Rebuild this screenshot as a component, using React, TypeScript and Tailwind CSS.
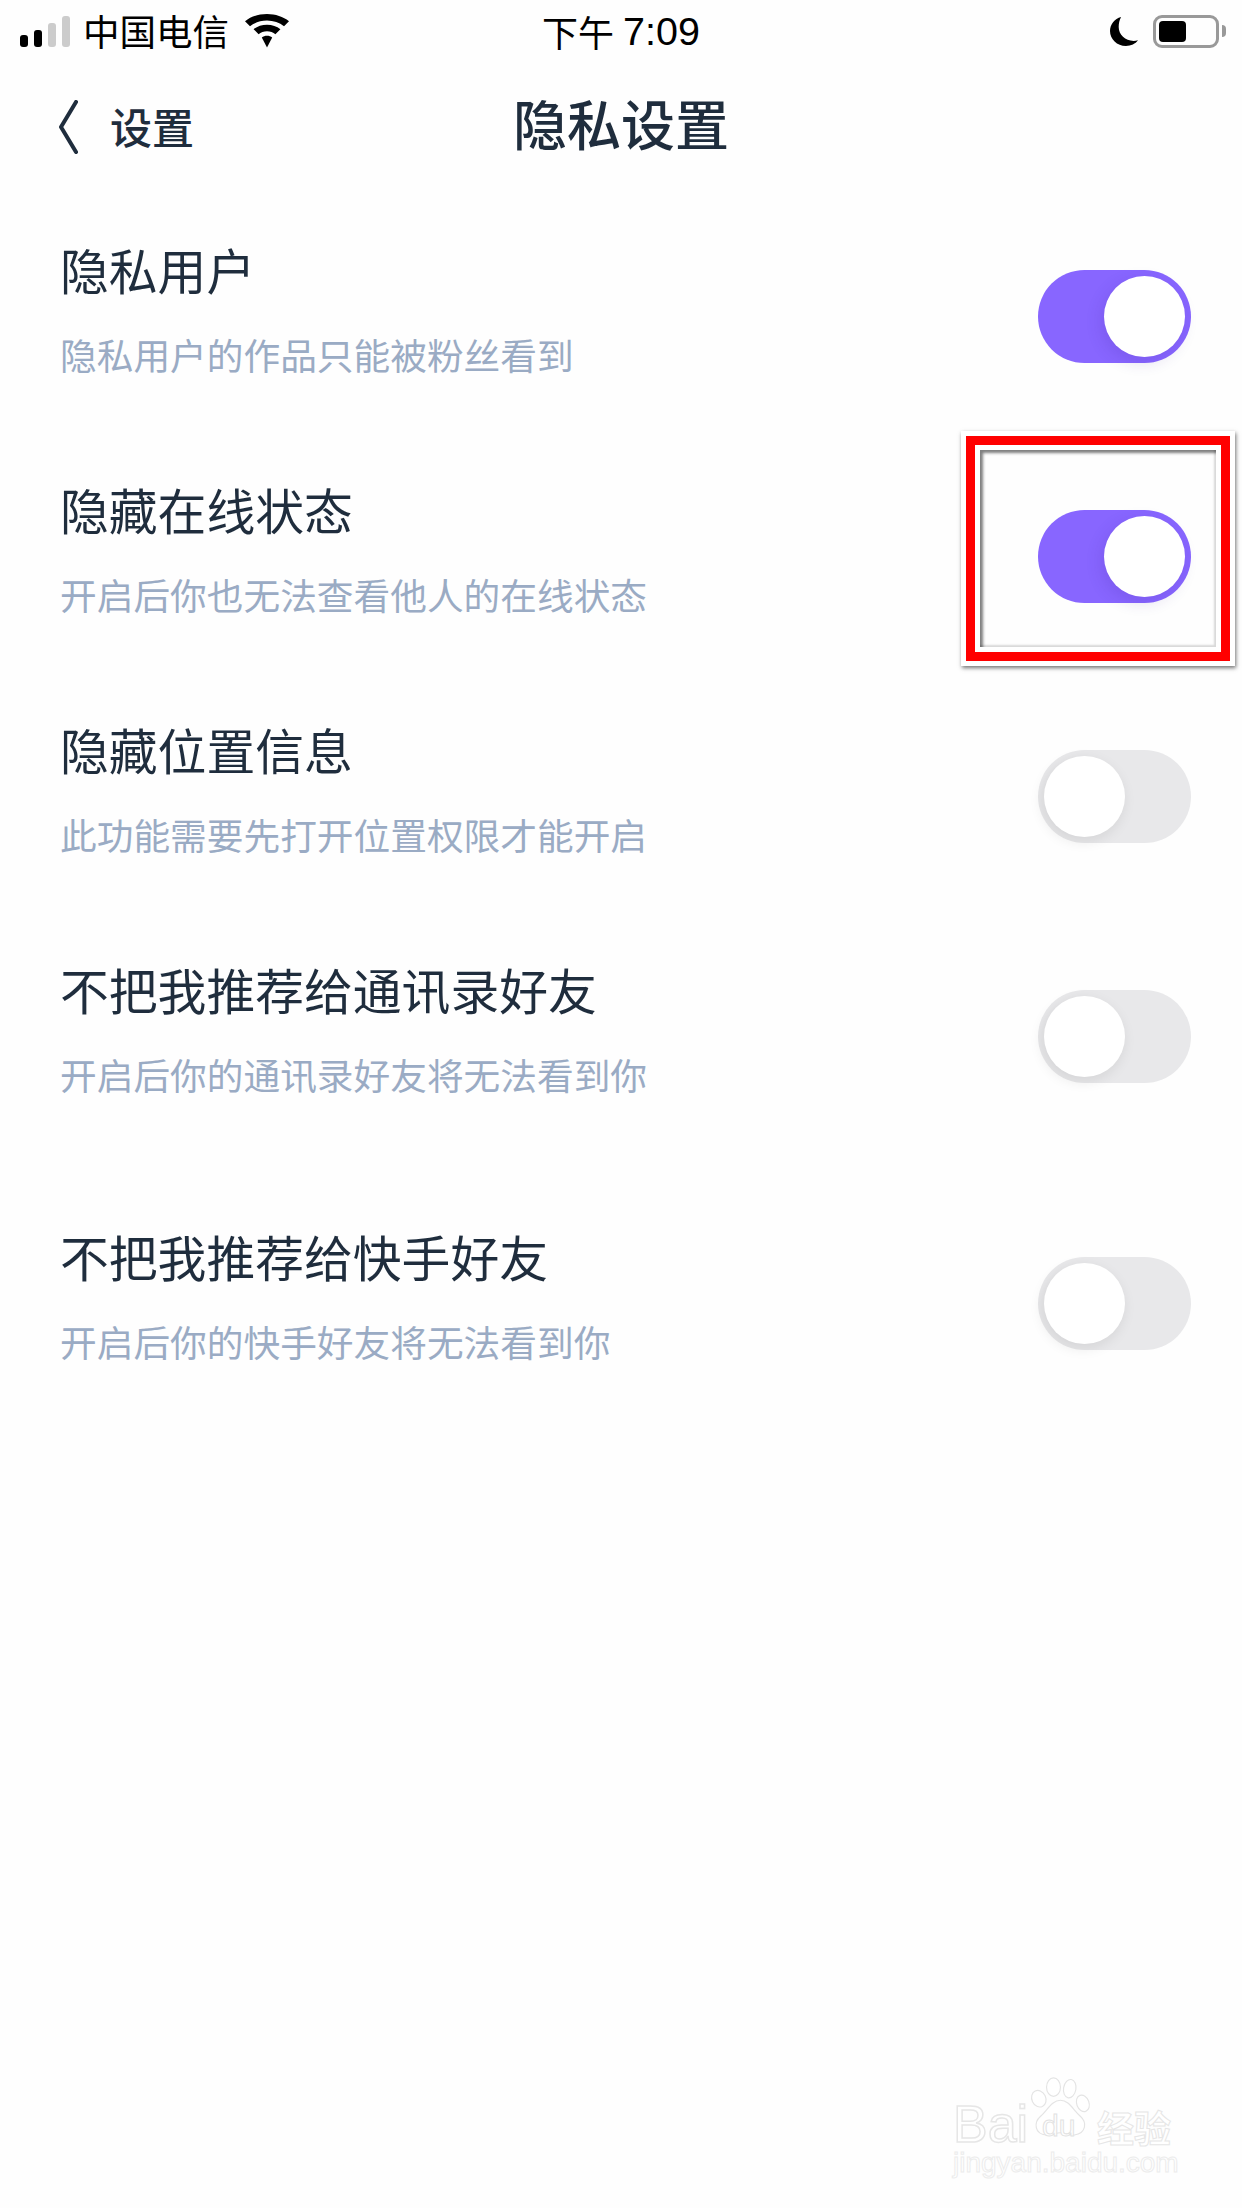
const rows = [
  { title: "隐私用户", sub: "隐私用户的作品只能被粉丝看到", on: true, h: "h-[240px]" },
  { title: "隐藏在线状态", sub: "开启后你也无法查看他人的在线状态", on: true, h: "h-[240px]" },
  { title: "隐藏位置信息", sub: "此功能需要先打开位置权限才能开启", on: false, h: "h-[240px]" },
  { title: "不把我推荐给通讯录好友", sub: "开启后你的通讯录好友将无法看到你", on: false, h: "h-[267px]" },
  { title: "不把我推荐给快手好友", sub: "开启后你的快手好友将无法看到你", on: false, h: "h-[240px]" },
];

const Toggle = ({ on }: { on: boolean }) => (
  <div
    className={
      on
        ? "flex h-[93px] w-[153px] items-center justify-end rounded-full bg-[#8866ff] pr-[6px]"
        : "flex h-[93px] w-[153px] items-center justify-start rounded-full bg-[#e8e8ea] pl-[6px]"
    }
  >
    <div
      className={
        on
          ? "h-[81px] w-[81px] rounded-full bg-white shadow-[-3px_5px_16px_rgba(60,30,150,0.16)]"
          : "h-[81px] w-[81px] rounded-full bg-white shadow-[-2px_4px_14px_rgba(0,0,0,0.09)]"
      }
    />
  </div>
);

const StatusBar = () => (
  <div className="relative flex h-[62px] items-center justify-between pl-[20px] pr-[16px] text-black">
    <div className="flex items-center">
      <div className="flex items-end gap-[6px]">
        <div className="h-[12px] w-[8px] rounded-[3px] bg-black" />
        <div className="h-[17px] w-[8px] rounded-[3px] bg-black" />
        <div className="h-[24px] w-[8px] rounded-[3px] bg-[#cccccc]" />
        <div className="h-[31px] w-[8px] rounded-[3px] bg-[#cccccc]" />
      </div>
      <span className="ml-[13px] text-[36.500px] leading-[44px]">中国电信</span>
      <svg className="ml-[15px]" width="46" height="34" viewBox="0 0 46 40" fill="black" preserveAspectRatio="none">
        <path d="M23 0C14.500 0 6.800 3.200 1 8.500L6 14.500C10.500 10.300 16.500 7.700 23 7.700C29.500 7.700 35.500 10.300 40 14.500L45 8.500C39.200 3.200 31.500 0 23 0Z" />
        <path d="M23 12.500C17.800 12.500 13.100 14.500 9.600 17.800L14.600 23.700C16.800 21.700 19.800 20.400 23 20.400C26.200 20.400 29.200 21.700 31.400 23.700L36.400 17.800C32.900 14.500 28.200 12.500 23 12.500Z" />
        <path d="M23 25.500C21 25.500 19.200 26.200 17.800 27.500L23 39.500L28.200 27.500C26.800 26.200 25 25.500 23 25.500Z" />
      </svg>
    </div>
    <div className="absolute left-[542px] top-[7px] flex items-center text-[36px] leading-[48px]">
      <span>下午</span>
      <span className="ml-[9px] text-[39.500px] font-['Liberation_Sans',sans-serif]">7:09</span>
    </div>
    <div className="flex items-center">
      <svg width="28" height="29" viewBox="0 0 29 33" fill="black" preserveAspectRatio="none">
        <path d="M11.500 0C4.600 2 0 8.500 0 16C0 25.400 7.300 33 16.500 33C21.800 33 26.300 30.500 29 26.500C27.500 27 26 27.200 24.500 27.200C15.800 27.200 9 20.400 9 11.500C9 7.300 9.800 3.500 11.500 0Z" />
      </svg>
      <div className="ml-[15px] h-[33px] w-[66px] rounded-[9px] border-[3px] border-[#999999] p-[3px]">
        <div className="h-[21px] w-[27px] rounded-[4px] bg-black" />
      </div>
      <div className="ml-[3px] h-[12px] w-[4px] rounded-r-full bg-[#999999]" />
    </div>
  </div>
);

const Watermark = () => (
  <div className="absolute left-[950px] top-[2072px] h-[120px] w-[270px] text-white">
    <span className="absolute left-[3px] top-[27px] text-[52px] leading-[50px] [-webkit-text-stroke:1.500px_#e6e6e6] font-['Liberation_Sans',sans-serif]">
      Bai
    </span>
    <svg className="absolute left-[78px] top-[2px]" width="68" height="68" viewBox="0 0 88 78" fill="#ffffff" stroke="#e4e4e4" strokeWidth="1.500">
      <ellipse cx="14" cy="27" rx="9" ry="11" transform="rotate(-25 14 27)" />
      <ellipse cx="33" cy="12" rx="9" ry="12" />
      <ellipse cx="54" cy="14" rx="8" ry="12" transform="rotate(10 54 14)" />
      <ellipse cx="71" cy="33" rx="8" ry="11" transform="rotate(-20 71 33)" />
      <path d="M42 29C31 29 25 42 16 50C8 57 7 73 25 74C32 74 36 71 42 71C48 71 53 75 60 74C76 72 76 57 68 50C58 41 53 29 42 29Z" />
    </svg>
    <span className="absolute left-[92px] top-[36px] text-[30px] leading-[36px] [-webkit-text-stroke:1px_#e2e2e2] font-['Liberation_Sans',sans-serif]">
      du
    </span>
    <span className="absolute left-[147px] top-[35px] text-[37px] leading-[40px] font-bold [-webkit-text-stroke:1px_#e6e6e6]">
      经验
    </span>
    <span className="absolute left-[3px] top-[77px] text-[28px] leading-[28px] [-webkit-text-stroke:1px_#ececec] font-['Liberation_Sans',sans-serif]">
      jingyan.baidu.com
    </span>
  </div>
);

export default function App() {
  return (
    <div className="relative h-[2208px] w-[1242px] overflow-hidden bg-[#fefefe] font-['Noto_Sans_CJK_SC','Noto_Sans',sans-serif]">
      <StatusBar />

      {/* 导航栏 */}
      <div className="relative flex h-[118px] items-center justify-center pt-[4px] text-[#1f2d3d]">
        <div className="absolute left-[58px] top-[34px] flex items-center">
          <svg className="mt-[2px]" width="20" height="54" viewBox="0 0 20 54" fill="none" stroke="#1f2d3d" strokeWidth="4" strokeLinecap="round" strokeLinejoin="round">
            <path d="M18 2L3 27L18 52" />
          </svg>
          <span className="ml-[32px] text-[42px] font-medium leading-[60px]">设置</span>
        </div>
        <span className="text-[54px] font-medium leading-[70px]">隐私设置</span>
      </div>

      <div className="pt-[16px]">
        {rows.map((row) => (
          <div key={row.title} className={`flex items-start justify-between pl-[60px] pr-[51px] ${row.h}`}>
            <div className="pt-[43px]">
              <div className="text-[48.800px] leading-[60px] text-[#1f2d3d]">{row.title}</div>
              <div className="mt-[31px] text-[36.700px] leading-[48px] text-[#9aabc4]">{row.sub}</div>
            </div>
            <div className="mt-[74px]">
              <Toggle on={row.on} />
            </div>
          </div>
        ))}
      </div>

      {/* 红色标注框 */}
      <div className="absolute left-[961px] top-[431px] h-[235px] w-[274px] bg-white p-[5px] shadow-[1px_2px_4px_rgba(0,0,0,0.55)]">
        <div className="h-full w-full border-[9px] border-[#ff0000] p-[5px]">
          <div className="flex h-full w-full items-center justify-end bg-[#fefefe] pr-[25px] pt-[15px] shadow-[inset_3px_3px_3px_rgba(0,0,0,0.5),inset_-2px_-2px_2px_rgba(0,0,0,0.15)]">
            <Toggle on />
          </div>
        </div>
      </div>

      <Watermark />
    </div>
  );
}
